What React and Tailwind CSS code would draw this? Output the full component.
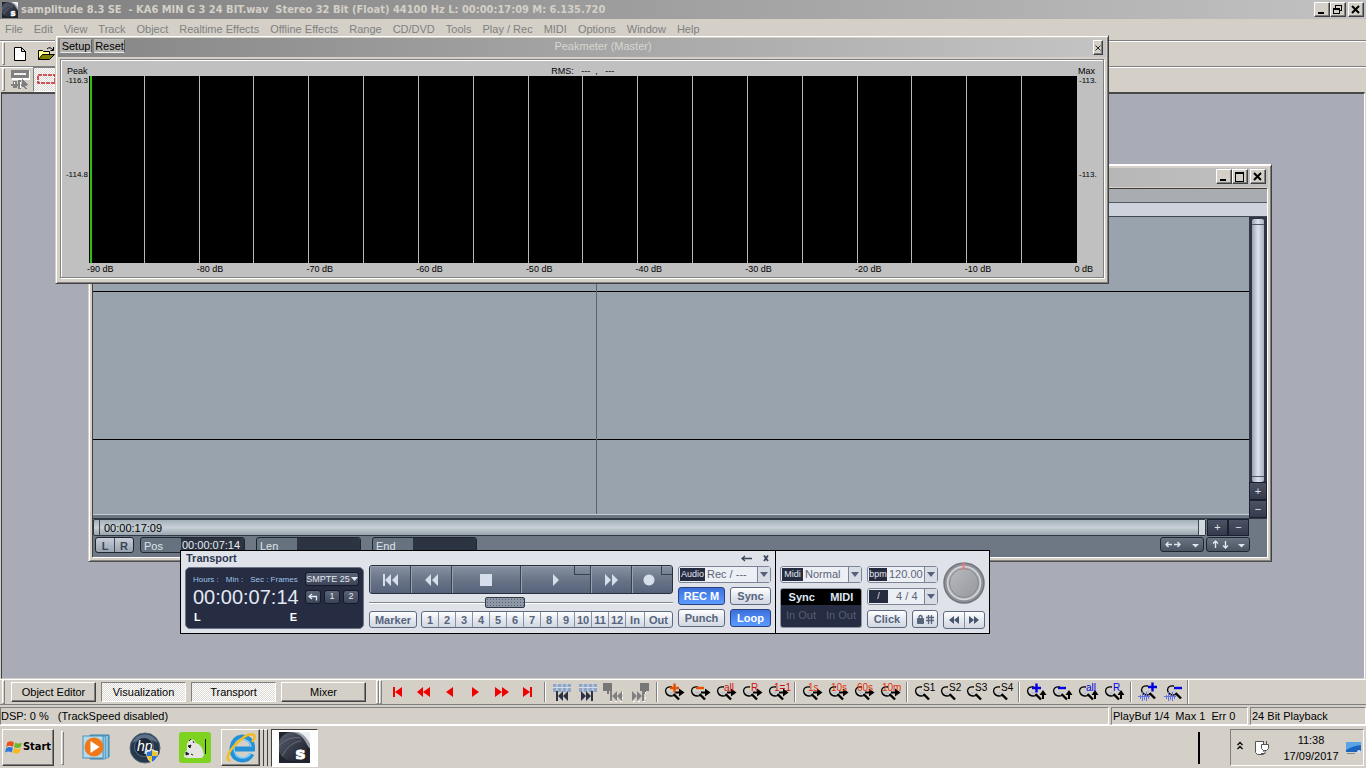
import clsx from "clsx";

const UI = "font-['Liberation_Sans',Arial,sans-serif]";

const raised =
  "border border-t-white border-l-white border-r-[#404040] border-b-[#404040] shadow-[inset_-1px_-1px_0_#808080]";
const sunken =
  "border border-t-[#808080] border-l-[#808080] border-r-white border-b-white";
const checker =
  "bg-[repeating-conic-gradient(#ffffff_0_25%,#dcd9d3_0_50%)] bg-[length:2px_2px]";

const menus = [
  "File", "Edit", "View", "Track", "Object", "Realtime Effects", "Offline Effects", "Range",
  "CD/DVD", "Tools", "Play / Rec", "MIDI", "Options", "Window", "Help",
];

function WindowButton({ kind }) {
  return (
    <button aria-label={kind} className={clsx("flex h-[15px] w-4 items-center justify-center bg-[#d4d0c8]", raised)}>
      <svg width="12" height="11" viewBox="0 0 12 11" fill="none" stroke="#000" shapeRendering="crispEdges">
        {kind === "Minimize" && <path d="M2 9h6" strokeWidth="2" />}
        {kind === "Maximize" && <path d="M1.500 1v9h8v-9M1 1.500h9M1 2.500h9" />}
        {kind === "Restore" && <path d="M3.500 4v-3h6v5h-2M3 1.500h7M1.500 4.500h6v5h-6zM1 5.500h7" />}
        {kind === "Close" && <path d="M2 2l7 7M9 2l-7 7" strokeWidth="2" shapeRendering="auto" />}
      </svg>
    </button>
  );
}

function SamLogo({ className }) {
  return (
    <svg viewBox="0 0 32 32" className={className} aria-hidden="true">
      <defs>
        <linearGradient id="sam" x1="0" y1="0" x2="1" y2="1">
          <stop offset="0" stopColor="#5c6272" />
          <stop offset="1" stopColor="#161a24" />
        </linearGradient>
      </defs>
      <rect width="32" height="32" fill="#20242e" />
      <circle cx="14" cy="15" r="15" fill="url(#sam)" />
      <path d="M12 0c9 1 14 6 18 15l2 2V0z" fill="#9a9eaa" />
      <path d="M19 0c6 2 10 6 13 12V0z" fill="#eceef0" />
      <path d="M0 14q10-10 22-8M3 25q7-14 20-16" stroke="#6a7080" strokeWidth="1" fill="none" />
      <text x="17" y="28" fontSize="17" fontWeight="900" fill="#fff" stroke="#fff" fontFamily="DejaVu Sans, sans-serif">s</text>
    </svg>
  );
}

function TitleBar() {
  return (
    <header className="flex h-[19px] items-center bg-linear-to-r from-[#808080] to-[#c2c2c2] pr-[2px] pl-[2px]">
      <SamLogo className="h-4 w-4" />
      <h1 className="flex-1 pl-[3px] font-['DejaVu_Sans_Condensed','DejaVu_Sans',sans-serif] text-[11px] leading-[18px] font-bold whitespace-pre text-[#d4d0c8]">
        samplitude 8.3 SE  - KA6 MIN G 3 24 BIT.wav  Stereo 32 Bit (Float) 44100 Hz L: 00:00:17:09 M: 6.135.720
      </h1>
      <WindowButton kind="Minimize" />
      <WindowButton kind="Restore" />
      <span className="w-[2px]" />
      <WindowButton kind="Close" />
    </header>
  );
}

function Grip({ className }) {
  return <span className={clsx("w-[3px] shrink-0 border border-t-white border-r-[#808080] border-b-[#808080] border-l-white", className)} />;
}

function TopBars() {
  return (
    <>
      <nav className="flex h-[21px] items-center gap-[11px] pl-[5px] text-[11px] text-[#808080]">
        {menus.map((m) => (
          <button key={m}>{m}</button>
        ))}
      </nav>
      <div className="flex h-[26px] items-stretch border-t border-[#808080] shadow-[inset_0_1px_0_#fff]">
        <Grip className="my-[1px] ml-[2px]" />
        <button aria-label="New" className="ml-[2px] flex w-[26px] items-center justify-center">
          <svg width="12" height="14" viewBox="0 0 12 14" fill="#fff" stroke="#000">
            <path d="M.5.5h7l4 4v9H.5zM7.500.5v4h4" />
          </svg>
        </button>
        <button aria-label="Open" className="flex w-[26px] items-center justify-center">
          <svg width="17" height="15" viewBox="0 0 17 15" stroke="#000" fill="none">
            <path d="M.5 13.500v-9h4l1 1h6v3" fill="#ffff8c" />
            <path d="M.5 13.500l4-5h12l-5 5z" fill="#808000" />
            <path d="M9 3q3-3 6 1M15.500 1v3.500h-3" />
          </svg>
        </button>
      </div>
      <div className="flex h-[26px] items-stretch border-t border-[#808080] shadow-[inset_0_1px_0_#fff]">
        <Grip className="my-[1px] ml-[2px]" />
        <button aria-label="Mouse mode" className="ml-[2px] flex w-[26px] items-center justify-center">
          <svg width="19" height="19" viewBox="0 0 19 19" shapeRendering="crispEdges">
            <path d="M1 1h18v9H1z" fill="#fff" />
            <path d="M0 0h18v8H0z" fill="#808080" />
            <path d="M3 3h12v2H3z" fill="#eee" />
            <path d="M2 11h4v7H2zM7 10h3v9H7zM11 9l6 6-3 1 2 3h-2l-2-3-1 2z" fill="#808080" />
            <path d="M0 14.500h11" stroke="#808080" strokeWidth="2" />
            <path d="M3 12v2M9 12v6" stroke="#fff" />
          </svg>
        </button>
        <button aria-label="Range mode" className={clsx("flex w-[26px] items-center justify-center", sunken, checker)}>
          <svg width="19" height="11" viewBox="0 0 19 11">
            <rect x="1" y="1" width="17" height="8" fill="none" stroke="#c8202c" strokeWidth="1.500" strokeDasharray="4 1" />
          </svg>
        </button>
      </div>
    </>
  );
}

const dbMarks = ["-90 dB", "-80 dB", "-70 dB", "-60 dB", "-50 dB", "-40 dB", "-30 dB", "-20 dB", "-10 dB"];

function PeakMeter() {
  return (
    <section className="absolute top-[35px] left-[55px] flex h-[249px] w-[1054px] flex-col border border-t-[#d4d0c8] border-r-[#404040] border-b-[#404040] border-l-[#d4d0c8] bg-[#d4d0c8] p-[2px] text-black shadow-[inset_1px_1px_0_#fff,inset_-1px_-1px_0_#808080]">
      <div className="flex h-[19px] items-start bg-linear-to-r from-[#868686] to-[#c4c4c4] pt-[1px] pr-[3px] pl-[2px]">
        <button className="h-[14px] w-8 border border-[#b8b8b4] border-r-[#606060] border-b-[#e8e8e8] bg-[#b4b2ae] text-[11px] leading-3">Setup</button>
        <button className="ml-[2px] h-[14px] w-[31px] border border-[#b8b8b4] border-r-[#606060] border-b-[#e8e8e8] bg-[#b4b2ae] text-[11px] leading-3">Reset</button>
        <h2 className="flex-1 pr-3 text-center text-[11px] leading-[14px] text-[#d8d6d0]">Peakmeter (Master)</h2>
        <button aria-label="Close" className={clsx("mt-[1px] flex h-[15px] w-[10px] items-center justify-center bg-[#d4d0c8]", raised)}>
          <svg width="6" height="6" viewBox="0 0 6 6" stroke="#222">
            <path d="M.5.5l5 5M5.500.5l-5 5" />
          </svg>
        </button>
      </div>
      <div className="mx-[2px] mt-[2px] mb-[3px] flex flex-1 flex-col border border-[#808080] bg-[#c0c0c0] pt-[6px] text-[9px] leading-[10px] shadow-[inset_1px_1px_0_#fff,1px_1px_0_#fff]">
        <div className="flex justify-between pr-[8px] pl-[6px]">
          <span>Peak</span>
          <span className="whitespace-pre">RMS:   ---  ,   ---</span>
          <span>Max</span>
        </div>
        <div className="flex h-[187px] text-[8px]">
          <div className="flex w-7 flex-col gap-[84px] text-right">
            <span className="pr-[1px]">-116.3</span>
            <span className="pr-[1px]">-114.8</span>
          </div>
          <div className="grid flex-1 grid-cols-18 border-l border-black bg-black shadow-[inset_2px_0_0_#30c010]">
            {Array.from({ length: 18 }, (_, i) => (
              <span key={i} className={clsx(i < 17 && "border-r border-[#b8b8b8]")} />
            ))}
          </div>
          <div className="flex w-[26px] flex-col gap-[84px] pl-[2px]">
            <span>-113.</span>
            <span>-113.</span>
          </div>
        </div>
        <div className="flex pt-[1px] pr-[10px] pl-[26px]">
          {dbMarks.map((d) => (
            <span key={d} className="flex-1">{d}</span>
          ))}
          <span>0 dB</span>
        </div>
      </div>
    </section>
  );
}

function DarkButton({ children, label, className }) {
  return (
    <button aria-label={label} className={clsx("flex items-center justify-center border border-[#1a2030] bg-linear-to-b from-[#4a5264] to-[#343b4c] text-[11px] leading-none text-[#e0e4ec]", className)}>
      {children}
    </button>
  );
}

function Field({ label, value, id, className }) {
  return (
    <div className={clsx("flex h-4 rounded-[3px] border border-[#20262f] bg-[#67727f] text-[11px] text-[#dde3ea]", className)}>
      <label htmlFor={id} className="w-10 pl-[3px] leading-[16px]">{label}</label>
      <input id={id} defaultValue={value} className="min-w-0 flex-1 rounded-r-[2px] bg-[#2c3442] px-[1px] leading-[14px] text-[#e6eaf0]" />
    </div>
  );
}

function EditorWindow() {
  return (
    <section className="absolute top-[164px] left-[88px] flex h-[398px] w-[1184px] flex-col border border-t-white border-r-[#404040] border-b-[#505050] border-l-[#d4d0c8] bg-[#d4d0c8] p-[3px] shadow-[inset_1px_1px_0_#fff,inset_-1px_-1px_0_#808080]">
      <div className="flex h-[19px] items-start justify-end bg-linear-to-r from-[#808080] to-[#c0c0c0] pt-[1px] pr-[2px]">
        <WindowButton kind="Minimize" />
        <WindowButton kind="Maximize" />
        <span className="w-[2px]" />
        <WindowButton kind="Close" />
      </div>
      <div className="mt-[1px] mr-[1px] mb-[1px] flex flex-1 flex-col border-t border-l border-[#404040] bg-[#6d7884] shadow-[1px_1px_0_#fff]">
        <div className="h-[14px] border-b border-[#505860] bg-[#a9adb1]" />
        <div className="h-[14px] border-b border-[#404850] bg-[#cdd2dd]" />
        <div className="flex h-[301px]">
          <div className="relative mb-[3px] flex flex-1 flex-col border-b border-[#c4ccd4] bg-[#98a3ae]">
            <div className="h-[75px] border-b border-black" />
            <div className="h-[148px] border-b border-black" />
            <div className="flex-1" />
            <span className="absolute inset-y-0 left-[503px] w-px bg-[#5c636a]" />
          </div>
          <div className="flex w-[18px] flex-col bg-[#2d3546]">
            <div className="mx-[3px] mt-[2px] flex flex-1 flex-col rounded-[2px] bg-linear-to-r from-[#9aa3b4] via-[#dfe3ee] to-[#a8b0c0]">
              <span className="h-[6px] border-b border-[#505868]" />
              <span className="flex-1" />
              <span className="h-[6px] border-t border-[#505868]" />
            </div>
            <DarkButton className="h-[18px]">+</DarkButton>
            <DarkButton className="h-[18px]">−</DarkButton>
          </div>
        </div>
        <div className="flex h-[18px] border-t border-[#303844]">
          <div className="mr-[1px] flex flex-1 items-stretch rounded-[2px] border border-[#303844] bg-linear-to-b from-[#a4b0b8] via-[#c8d0d6] to-[#98a4ae] text-[11px] leading-4 text-black">
            <span className="w-[6px] border-r border-[#404850]" />
            <span className="flex-1 pl-1">00:00:17:09</span>
            <span className="w-[7px] border-l border-[#404850] bg-[#d0d8e0]" />
          </div>
          <DarkButton className="w-[21px]">+</DarkButton>
          <DarkButton className="w-[21px]">−</DarkButton>
          <span className="w-[18px]" />
        </div>
        <div className="flex flex-1 items-start pt-[1px] pl-[2px]">
          <div className="flex h-4 w-[39px] rounded-[3px] border border-[#20262f] bg-linear-to-b from-[#c8ced8] to-[#98a2b0] text-[11px] leading-[16px] font-bold text-[#3c4450]">
            <button className="flex-1 border-r border-[#404850]">L</button>
            <button className="flex-1">R</button>
          </div>
          <Field id="pos" label="Pos" value="00:00:07:14" className="ml-[6px] w-[105px]" />
          <Field id="len" label="Len" value="" className="ml-[11px] w-[105px]" />
          <Field id="end" label="End" value="" className="ml-[11px] w-[105px]" />
          <span className="flex-1" />
          <button aria-label="Horizontal zoom" className="mr-[2px] flex h-[15px] w-[44px] items-center justify-center rounded-[3px] border border-[#20262f] bg-linear-to-b from-[#6a7482] to-[#4a5462]">
            <svg width="34" height="9" viewBox="0 0 34 9" stroke="#e0e4ec" fill="#e0e4ec">
              <path d="M1 4.500h6M9 4.500h6M3.500 2L1 4.500 3.500 7M12.500 2L15 4.500 12.500 7" fill="none" strokeWidth="1.400" />
              <path d="M27 4h7l-3.500 3.500z" stroke="none" />
            </svg>
          </button>
          <button aria-label="Vertical zoom" className="mr-[17px] flex h-[15px] w-[44px] items-center justify-center rounded-[3px] border border-[#20262f] bg-linear-to-b from-[#6a7482] to-[#4a5462]">
            <svg width="34" height="9" viewBox="0 0 34 9" stroke="#e0e4ec" fill="#e0e4ec">
              <path d="M4.500 1v7M2 3.500L4.500 1 7 3.500M14.500 1v7M12 5.500L14.500 8 17 5.500" fill="none" strokeWidth="1.400" />
              <path d="M27 4h7l-3.500 3.500z" stroke="none" />
            </svg>
          </button>
        </div>
      </div>
    </section>
  );
}

const lightBtn =
  "rounded-[3px] border border-[#5d6a80] bg-linear-to-b from-[#ffffff] via-[#e4e8ef] to-[#d2d8e2] text-[#56647c]";
const blueBtn =
  "rounded-[3px] border border-[#28407c] bg-linear-to-b from-[#3c70dc] to-[#5c9cff] text-white";
const smallDark =
  "flex items-center justify-center rounded-[3px] border border-[#141a28] bg-linear-to-b from-[#5c6478] to-[#3c4458] text-[#e4e8f0]";

const transportKeys = [
  { name: "To start", w: "w-[41px]", d: "M0 0h2v12H0zM8 0v12L2 6zM15 0v12L9 6z", box: "0 0 15 12" },
  { name: "Rewind", w: "w-[41px]", d: "M6 0v12L0 6zM13 0v12L7 6z", box: "0 0 13 12" },
  { name: "Stop", w: "w-[69px]", d: "M0 0h12v12H0z", box: "0 0 12 12" },
  { name: "Play", w: "w-[70px]", d: "M0 0v12l6-6z", box: "0 0 6 12", tab: "w-4" },
  { name: "Forward", w: "w-[41px]", d: "M0 0v12l6-6zM7 0v12l6-6z", box: "0 0 13 12" },
  { name: "Record", w: "flex-1 pr-[7px]", d: "M6 .5a5.500 5.500 0 1 0 .01 0z", box: "0 0 12 12", tab: "w-[11px]" },
];

function Picker({ id, tag, value, tagClass }) {
  return (
    <div className="flex h-[17px] rounded-[3px] border border-[#7c8598] bg-[#eceff4]">
      <label htmlFor={id} className={clsx("my-px ml-px bg-[#262c40] text-center text-[9px] leading-[13px] text-[#e4e8f0]", tagClass)}>{tag}</label>
      <select id={id} className="min-w-0 flex-1 appearance-none pl-[2px] text-[11px] leading-[15px] text-[#5c6678]">
        <option>{value}</option>
      </select>
      <span className="flex w-[13px] items-center justify-center border-l border-[#7c8598] bg-[#d8dce4]">
        <svg width="8" height="5" viewBox="0 0 8 5"><path d="M0 0h8L4 5z" fill="#56607a" /></svg>
      </span>
    </div>
  );
}

function TransportPanel() {
  return (
    <section className="absolute top-[550px] left-[180px] flex h-[84px] w-[810px] border border-black bg-[#dfe2e9]">
      <div className="flex flex-1 flex-col border-r border-black px-1">
        <div className="flex h-[14px] items-center">
          <h2 className="flex-1 pl-[1px] text-[11px] leading-[14px] font-bold text-[#2c3850]">Transport</h2>
          <svg width="30" height="9" viewBox="0 0 30 9" fill="none" stroke="#3c465a">
            <path d="M1 4.500h10M4 2L1 4.500 4 7" strokeWidth="1.300" />
            <path d="M23 1.500l4 5.500M27 1.500l-4 5.500" strokeWidth="1.800" />
          </svg>
        </div>
        <div className="flex">
          <div className="mt-[2px] flex h-[62px] w-[179px] justify-between rounded-[5px] border border-[#6c7488] bg-[#262c42] pr-1 pl-[7px]">
            <div>
              <div className="flex gap-[7px] pt-[7px] text-[8px] leading-[9px] whitespace-nowrap text-[#9ec4e8]">
                <span>Hours :</span>
                <span>Min :</span>
                <span>Sec : Frames</span>
              </div>
              <div className="pt-[1px] text-[20px] leading-[24px] text-[#e2e8f2]">00:00:07:14</div>
              <div className="flex gap-[89px] pl-[1px] text-[11px] leading-[16px] font-bold text-white">
                <span>L</span>
                <span>E</span>
              </div>
            </div>
            <div className="flex w-[54px] flex-col gap-1 pt-1">
              <button className={clsx(smallDark, "h-[14px] gap-px text-[9px] leading-3 whitespace-nowrap")}>
                SMPTE 25
                <svg width="7" height="4" viewBox="0 0 7 4"><path d="M0 0h7L3.500 4z" fill="#e4e8f0" /></svg>
              </button>
              <div className="flex gap-[3px] text-[9px]">
                <button aria-label="Back" className={clsx(smallDark, "h-[14px] flex-1")}>
                  <svg width="10" height="8" viewBox="0 0 10 8" fill="none" stroke="#e4e8f0"><path d="M1 3.500h7.500v4M4 1L1 3.500 4 6" strokeWidth="1.300" /></svg>
                </button>
                <button className={clsx(smallDark, "h-[14px] flex-1")}>1</button>
                <button className={clsx(smallDark, "h-[14px] flex-1")}>2</button>
              </div>
            </div>
          </div>

          <div className="ml-[5px] flex w-[304px] flex-col">
            <div className="flex h-[29px] overflow-hidden rounded-[3px] border border-[#28303e] bg-linear-to-b from-[#8791a2] via-[#6a7588] to-[#56627a]">
              {transportKeys.map((k) => (
                <button
                  key={k.name}
                  aria-label={k.name}
                  className={clsx("relative flex items-center justify-center border-r border-[#38424f] shadow-[inset_1px_1px_0_#98a2b2] last:border-r-0", k.w)}
                >
                  <svg viewBox={k.box} className="h-3" fill="#d6deec"><path d={k.d} /></svg>
                  {k.tab && <span className={clsx("absolute top-0 right-0 h-[9px] border-b border-l border-[#38424f]", k.tab)} />}
                </button>
              ))}
            </div>
            <div className="flex h-[17px] items-center">
              <span className="h-[2px] w-[116px] border-t border-[#808890] bg-white" />
              <button aria-label="Jog" className="h-[11px] w-10 rounded-[2px] border border-[#303844] bg-[#8d97a5] bg-[radial-gradient(#56606e_0.5px,transparent_1px)] bg-[length:3px_3px]" />
              <span className="h-[2px] flex-1 border-t border-[#808890] bg-white" />
            </div>
            <div className="flex h-[17px] gap-1 text-[11px] leading-[16px] font-bold">
              <button className={clsx(lightBtn, "w-12")}>Marker</button>
              <div className={clsx(lightBtn, "flex flex-1 overflow-hidden")}>
                {Array.from({ length: 12 }, (_, i) => (
                  <button key={i} className="w-[17px] border-r border-[#8892a4]">{i + 1}</button>
                ))}
                <button className="w-[19px] border-r border-[#8892a4]">In</button>
                <button className="flex-1">Out</button>
              </div>
            </div>
          </div>

          <div className="ml-[5px] flex flex-1 flex-col gap-1 pt-[1px] text-[11px] font-bold">
            <div className="font-normal">
              <Picker id="audio" tag="Audio" value="Rec / ---" tagClass="w-[25px]" />
            </div>
            <div className="flex gap-[5px]">
              <button className={clsx(blueBtn, "h-[18px] w-[47px] leading-4")}>REC M</button>
              <button className={clsx(lightBtn, "h-[18px] flex-1 leading-4")}>Sync</button>
            </div>
            <div className="flex gap-[5px]">
              <button className={clsx(lightBtn, "h-[18px] w-[47px] leading-4")}>Punch</button>
              <button className={clsx(blueBtn, "h-[18px] flex-1 leading-4")}>Loop</button>
            </div>
          </div>
        </div>
      </div>

      <div className="flex w-[213px] gap-[5px] px-1 pt-[15px]">
        <div className="flex w-[82px] flex-col gap-[5px]">
          <Picker id="midi" tag="Midi" value="Normal" tagClass="w-[21px]" />
          <div className="flex h-10 flex-col overflow-hidden rounded-[3px] border border-[#8d95a6] bg-[#262c42] text-[11px]">
            <div className="flex h-4 justify-around bg-black leading-4 font-bold text-[#dfe8f6]">
              <span>Sync</span>
              <span>MIDI</span>
            </div>
            <div className="flex justify-around pt-[2px] leading-4 text-[#555d72]">
              <span>In Out</span>
              <span>In Out</span>
            </div>
          </div>
        </div>
        <div className="flex w-[71px] flex-col gap-[5px]">
          <Picker id="bpm" tag="bpm" value="120.00" tagClass="w-[18px]" />
          <Picker id="meter" tag="/" value="&nbsp;&nbsp;4 / 4" tagClass="w-[19px]" />
          <div className="flex gap-[5px] text-[11px] leading-4 font-bold">
            <button className={clsx(lightBtn, "h-[18px] w-10")}>Click</button>
            <button aria-label="Lock grid" className={clsx(lightBtn, "flex h-[18px] flex-1 items-center justify-center")}>
              <svg width="17" height="10" viewBox="0 0 17 10" fill="none" stroke="#56647c">
                <path d="M.5 4.500h6v5h-6z" fill="#56647c" />
                <path d="M2 4V2.500q1.500-2 3 0V4M9 3.500h8M9 6.500h8M11.500 1v9M14.500 1v9" strokeWidth="1.300" />
              </svg>
            </button>
          </div>
        </div>
        <div className="flex w-[42px] flex-col justify-between pb-[4px]">
          <svg viewBox="0 0 42 42" className="-mt-1 h-[42px] w-[42px]" role="img" aria-label="Jog wheel">
            <defs>
              <linearGradient id="knob" x1="0" y1="0" x2="1" y2="1">
                <stop offset="0" stopColor="#b8babe" />
                <stop offset="1" stopColor="#94979d" />
              </linearGradient>
            </defs>
            <circle cx="21" cy="21" r="20" fill="#8e9197" stroke="#74777e" strokeWidth="1.500" />
            <circle cx="21" cy="21" r="16.500" fill="#b4b6ba" stroke="#d4d6da" strokeWidth="1.500" />
            <circle cx="21" cy="21" r="14.500" fill="url(#knob)" stroke="#84878e" strokeWidth="1" />
            <path d="M20.500 1v7" stroke="#f47a7a" strokeWidth="2" />
          </svg>
          <div className={clsx(lightBtn, "flex h-[18px]")}>
            <button aria-label="Nudge back" className="flex flex-1 items-center justify-center border-r border-[#8892a4]">
              <svg width="10" height="8" viewBox="0 0 10 8" fill="#48566e"><path d="M5 0v8L0 4zM10 0v8L5 4z" /></svg>
            </button>
            <button aria-label="Nudge forward" className="flex flex-1 items-center justify-center">
              <svg width="10" height="8" viewBox="0 0 10 8" fill="#48566e"><path d="M0 0v8l5-4zM5 0v8l5-4z" /></svg>
            </button>
          </div>
        </div>
      </div>
    </section>
  );
}

const redKeys = [
  { name: "Go to start", d: "M8 6h2v10H8zM17 6v10L10 11z" },
  { name: "Page left", d: "M12 6v10L6 11zM19 6v10L12 11z" },
  { name: "Step left", d: "M16 6v10L9 11z" },
  { name: "Step right", d: "M9 6v10L16 11z" },
  { name: "Page right", d: "M6 6v10L13 11zM13 6v10L20 11z" },
  { name: "Go to end", d: "M8 6v10L15 11zM15 6h2v10h-2z" },
];

function ToolButton({ name, children }) {
  return (
    <button aria-label={name} className="h-[22px] w-[26px]">
      <svg width="26" height="22" viewBox="0 0 26 22" className="font-['Liberation_Sans',Arial,sans-serif]">{children}</svg>
    </button>
  );
}

const labelX = { all: 11, R: 12, "1=1": 9, "1s": 9, "10s": 6, "60s": 6, "10m": 5, S1: 12, S2: 12, S3: 12, S4: 12 };

function Lens({ sign, color, arrow, wave }) {
  return (
    <ToolButton name={"Zoom " + sign}>
      <g transform={wave ? "translate(2 -1)" : undefined}>
        <path d="M11 6q-6-1-6.500 4 1 5 6 5 2 0 3.500-1" fill="none" stroke="#000" strokeWidth="1.300" />
        <path d="M7 11.500l3 2 3-3" fill="#b4c0d4" />
        <path d="M12.500 13l5.500 5.500" stroke="#000" strokeWidth="2.400" />
      </g>
      {arrow === "x" && <path d="M14 10.500h4v-3l5.500 4-5.500 4v-3h-4z" fill="#000" />}
      {arrow === "y" && <path d="M20 9l-3.500 5h2.500v4h2v-4h2.500z" fill="#000" />}
      {wave && <path d="M3 15.500h12M5.500 14v4M7.500 11v9M9.500 13v6M11.500 11v9M13.500 14v4" stroke="#6474e0" fill="none" />}
      {sign === "+" && <path d={wave ? "M13 6h9M17.500 1.500v9" : "M9 7h9M13.500 2.500v9"} stroke={color} strokeWidth="2.400" />}
      {sign === "-" && <path d={wave ? "M13 7h8" : "M9 7h8"} stroke={color} strokeWidth="2.400" />}
      {labelX[sign] && (
        <text x={labelX[sign]} y="10" fontSize="10" fill={color}>{sign}</text>
      )}
    </ToolButton>
  );
}

function Ranged({ name, right, gray }) {
  const c = gray ? "#808080" : "#2c3444";
  return (
    <ToolButton name={name}>
      {gray ? (
        <path d={right ? "M13 2h9v8h-3v3h-2v-3h-4z" : "M2 2h9v8h-3v3H6v-3H2z"} fill="#777" />
      ) : (
        <path d="M4 3h18v8H4z" fill="#8fa6c4" />
      )}
      {!gray && <path d="M4 6.500h18M8 2v9M13 3v8M18 2v9" stroke="#d4deec" />}
      <g transform={gray ? (right ? "translate(-1 0)" : "translate(2 0)") : "translate(0 0)"}>
        <path
          d={right ? "M6 10v10l5-5zM11 10v10l5-5zM16 10h2v10h-2z" : "M7 10h2v10H7zM14 10v10L9 15zM19 10v10l-5-5z"}
          fill={c}
        />
        {gray && <path d="M7 20.500h12M19.500 11v9" stroke="#fff" strokeDasharray="2 3" />}
      </g>
    </ToolButton>
  );
}

function Divider() {
  return <span className="mx-[3px] h-5 w-[2px] border-l border-[#808080] bg-white" />;
}

function BottomBar() {
  const tabs = [
    ["Object Editor", false],
    ["Visualization", true],
    ["Transport", true],
    ["Mixer", false],
  ];
  return (
    <div className="flex h-[26px] items-center border-t border-b border-t-white border-b-[#808080] bg-[#d4d0c8] pl-[2px]">
      <Grip className="h-6" />
      <div className="flex gap-[5px] pl-[6px]">
        {tabs.map(([t, on]) => (
          <button key={t} className={clsx("h-5 w-[85px] text-[11px] leading-[18px] text-black", on ? sunken : raised, on && checker)}>
            {t}
          </button>
        ))}
      </div>
      <Grip className="ml-[10px] h-6" />
      <Grip className="mr-[3px] h-6" />
      {redKeys.map((k) => (
        <ToolButton key={k.name} name={k.name}><path d={k.d} fill="#f00000" /></ToolButton>
      ))}
      <Divider />
      <Ranged name="Previous range" />
      <Ranged name="Next range" right />
      <Ranged name="Previous object" gray />
      <Ranged name="Next object" gray right />
      <Divider />
      <Lens sign="+" color="#e85000" arrow="x" />
      <Lens sign="-" color="#e85000" arrow="x" />
      <Lens sign="all" color="#d01010" arrow="x" />
      <Lens sign="R" color="#d01010" arrow="x" />
      <Lens sign="1=1" color="#d01010" arrow="x" />
      <Divider />
      <Lens sign="1s" color="#e03008" arrow="x" />
      <Lens sign="10s" color="#e03008" arrow="x" />
      <Lens sign="60s" color="#e03008" arrow="x" />
      <Lens sign="10m" color="#e03008" arrow="x" />
      <Divider />
      <Lens sign="S1" color="#000" />
      <Lens sign="S2" color="#000" />
      <Lens sign="S3" color="#000" />
      <Lens sign="S4" color="#000" />
      <Divider />
      <Lens sign="+" color="#0000e0" arrow="y" />
      <Lens sign="-" color="#0000e0" arrow="y" />
      <Lens sign="all" color="#0000e0" arrow="y" />
      <Lens sign="R" color="#0000e0" arrow="y" />
      <Divider />
      <Lens sign="+" color="#0000e0" wave />
      <Lens sign="-" color="#0000e0" wave />
      <span className="h-6 w-[2px] border-l border-[#808080] bg-white" />
    </div>
  );
}

function StatusBar() {
  return (
    <footer className="flex h-5 gap-[2px] bg-[#d4d0c8] pt-[2px] text-[11px] leading-4 whitespace-pre text-black">
      <span className={clsx("flex-1", sunken)}>DSP: 0 %   (TrackSpeed disabled)</span>
      <span className={clsx("w-[137px] pl-px", sunken)}>PlayBuf 1/4  Max 1  Err 0</span>
      <span className={clsx("w-[116px] pl-px", sunken)}>24 Bit Playback</span>
    </footer>
  );
}

function Taskbar() {
  return (
    <div className="flex h-[43px] items-center border-t border-white bg-[#d4d0c8] px-[2px] pt-[1px] text-black">
      <button className={clsx("flex h-[37px] w-[52px] items-center justify-center font-['DejaVu_Sans_Condensed','DejaVu_Sans',sans-serif] text-[11px] font-bold", raised)}>
        <svg width="18" height="16" viewBox="0 0 16 14">
          <path d="M2 2q3-2 6 0L7 6q-3-2-6 0z" fill="#e8501c" />
          <path d="M9 2q3 2 6 0l-1 4q-3 2-6 0z" fill="#6cb82c" />
          <path d="M1 7q3-2 6 0l-1 4q-3-2-6 0z" fill="#2c78d8" />
          <path d="M8 7q3 2 6 0l-1 4q-3 2-6 0z" fill="#f8b81c" />
        </svg>
        Start
      </button>
      <span className="ml-[7px] h-[34px] w-[3px] border border-white border-r-[#808080] border-b-[#808080]" />
      <button aria-label="Media player" className="ml-[17px] flex w-[30px] justify-center">
        <svg width="28" height="27" viewBox="0 0 28 27">
          <path d="M8 1h19v22l-5 2H8z" fill="#58a4cc" stroke="#3c80a8" />
          <path d="M22 3v22M25 2v22" stroke="#c4e4f4" />
          <rect x="1" y="2" width="20" height="22" fill="#b4dcf0" stroke="#4c90b4" />
          <circle cx="12" cy="13" r="9.500" fill="#f07818" />
          <path d="M8.500 7v12l9-6z" fill="#fff" />
        </svg>
      </button>
      <button aria-label="HP support" className="ml-[18px]">
        <svg width="32" height="32" viewBox="0 0 32 32">
          <circle cx="16" cy="16" r="15" fill="#28384c" stroke="#50647c" />
          <path d="M3 11a14 14 0 0 1 26 0q-12-7-26 0z" fill="#5c7088" />
          <circle cx="15" cy="15" r="9.500" fill="#1c2838" stroke="#70849c" strokeWidth=".7" />
          <text x="8" y="19" fontSize="14" fontStyle="italic" fill="#fff" fontFamily="Liberation Sans, sans-serif">hp</text>
          <path d="M17 19q4 0 6-2 3 2 6 2 0 9-6 12-6-3-6-12z" fill="#f4f4f4" />
          <path d="M18 20q3 0 5-2v6h-5zM23 24h5q-1 4-5 6z" fill="#2874d0" />
          <path d="M23 18q2 2 5 2v4h-5zM18 24h5v6q-4-2-5-6z" fill="#f4c420" />
        </svg>
      </button>
      <button aria-label="Paint" className="ml-[18px]">
        <svg width="32" height="31" viewBox="0 0 32 31">
          <rect width="32" height="31" rx="3" fill="#7ed321" />
          <path d="M5 25q0-5 3-7-1-8 3-10 4-2 6 3 6 1 8 12l-2 3H8z" fill="#e4e4e0" />
          <path d="M9 14l3-1-1 3zM7 20l3 2-3 1zM14 9l1 2M10 9l2-2M12 22l2 1" stroke="#222" fill="#222" />
          <path d="M26.500 7v15" stroke="#111" />
        </svg>
      </button>
      <button aria-label="Internet Explorer" className={clsx("ml-[10px] flex h-[37px] w-[39px] items-center justify-center", raised)}>
        <svg width="30" height="31" viewBox="0 0 30 31" fill="none">
          <path d="M26 22q-3 6-10 6-10-1-10-12Q7 6 16 5q11 1 10.500 12H7" stroke="#2490d8" strokeWidth="5" />
          <path d="M25 21q-3 5-9 5-8-1-8-10 1-8 8-9 8 1 9 8" stroke="#7cd0f8" strokeWidth="1.500" />
          <path d="M4 29q-6-3 4-15Q22-1 28 3q2 2-2 7" stroke="#f4bc20" strokeWidth="2.500" />
        </svg>
      </button>
      <span className="h-[37px] w-1 border-t border-r border-t-white border-r-[#404040]" />
      <span className="h-[37px] w-1 border-t border-r border-t-white border-r-[#404040]" />
      <button aria-label="Samplitude" className="ml-[3px] flex h-[38px] w-[47px] items-center justify-center border border-t-[#404040] border-r-white border-b-white border-l-[#404040] bg-white">
        <SamLogo className="h-[31px] w-[31px]" />
      </button>
      <span className="flex-1" />
      <span className="mr-[30px] h-8 w-[2px] bg-black" />
      <div className={clsx("flex h-[37px] w-[134px] items-center pr-px pl-[6px]", sunken)}>
        <svg width="6" height="9" viewBox="0 0 6 9" className="-mt-1" fill="none" stroke="#000" strokeWidth="1.300"><path d="M.5 4L3 1.500 5.500 4M.5 8L3 5.500 5.500 8" /></svg>
        <svg width="16" height="17" viewBox="0 0 16 17" className="ml-[11px]" fill="#fff" stroke="#555">
          <path d="M1.500 2.500h8v13h-6l-2-2z" />
          <path d="M7.500 5.500h7v4l-2 2h-3l-2-2zM9.500 2v3M12.500 2v3M11 11.500v3H7" />
        </svg>
        <div className="flex-1 pl-[6px] text-center text-[11px] leading-4">
          <div>11:38</div>
          <div>17/09/2017</div>
        </div>
        <svg width="16" height="14" viewBox="0 0 16 14">
          <path d="M0 1h15v10H0z" fill="#1c64c0" />
          <path d="M0 1h15v3Q6 5 0 9z" fill="#5ca4e8" />
          <path d="M1 12h8v1H1z" fill="#888" />
          <circle cx="13" cy="11" r="2" fill="#d0dce8" />
        </svg>
      </div>
    </div>
  );
}

export default function App() {
  return (
    <div className={clsx("relative flex min-h-screen flex-col overflow-hidden bg-[#d4d0c8]", UI)}>
      <TitleBar />
      <TopBars />
      <main className="mr-[1px] ml-[1px] flex-1 border-t-2 border-r border-b border-l border-t-[#484848] border-r-white border-b-[#d4d0c8] border-l-[#404040] bg-[#a9abb7]">
        <EditorWindow />
        <PeakMeter />
        <TransportPanel />
      </main>
      <BottomBar />
      <StatusBar />
      <Taskbar />
    </div>
  );
}
